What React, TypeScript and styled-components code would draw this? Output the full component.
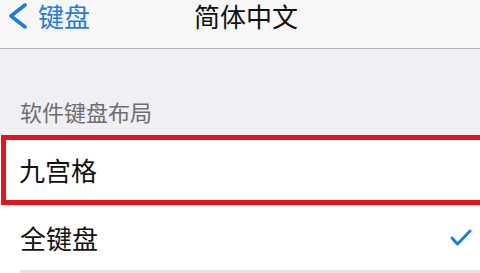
import React from 'react'
import styled, { createGlobalStyle } from 'styled-components'

const GlobalStyle = createGlobalStyle`
  html, body {
    margin: 0;
    padding: 0;
    background: #ffffff;
    overflow: hidden;
  }
  body {
    font-family: 'Noto Sans CJK SC', 'Noto Sans', sans-serif;
  }
  *, *::before, *::after {
    box-sizing: border-box;
  }
`

const Screen = styled('div')`
  width: 480px;
  height: 273px;
  overflow: hidden;
  background: #ffffff;
`

const NavBar = styled('div')`
  height: 49px;
  display: grid;
  grid-template-columns: 1fr auto 1fr;
  align-items: start;
  padding-top: 1px;
  background: #f7f7f8;
  border-bottom: 1px solid #b4b4b6;
`

const BackButton = styled('div')`
  display: flex;
  align-items: center;
  gap: 10px;
  padding-left: 8px;
  height: 29px;
  color: #1f7ddc;
  font-size: 26px;
  line-height: 29px;
`

const NavTitle = styled('div')`
  height: 29px;
  padding-left: 12px;
  color: #111111;
  font-size: 26px;
  line-height: 29px;
`

const GroupBackground = styled('div')`
  background: #efeff4;
  padding: 48px 0 10px 20px;
`

const SectionHeader = styled('div')`
  color: #6d6d72;
  font-size: 22px;
  line-height: 28px;
`

const Row = styled('div')<{ $highlighted?: boolean; $height: number }>`
  display: flex;
  align-items: center;
  justify-content: space-between;
  height: ${(p) => p.$height}px;
  padding: 0 8px 0 ${(p) => (p.$highlighted ? 13 : 20)}px;
  background: #ffffff;
  color: #111111;
  font-size: 26px;
  line-height: 30px;
  border: ${(p) => (p.$highlighted ? '5px solid #e2151c' : 'none')};
  margin: ${(p) => (p.$highlighted ? '0 -20px 0 1px' : '0')};
`

const Separator = styled('div')`
  height: 3px;
  margin-left: 20px;
  background: #e3e3e6;
`

const Chevron = () => (
  <svg width="20" height="26" viewBox="0 0 20 26">
    <polyline points="17,2 3,13 17,24" fill="none" stroke="#1f7ddc" strokeWidth="3.6" strokeLinecap="round" strokeLinejoin="round" />
  </svg>
)

const Check = () => (
  <svg width="22" height="18" viewBox="0 0 22 18">
    <polyline points="2,9 7.5,15 20,2" fill="none" stroke="#1f7ddc" strokeWidth="3" strokeLinecap="round" strokeLinejoin="round" />
  </svg>
)

export default function App() {
  return (
    <Screen>
      <GlobalStyle />
      <NavBar>
        <BackButton>
          <Chevron />
          <span>键盘</span>
        </BackButton>
        <NavTitle>简体中文</NavTitle>
        <div />
      </NavBar>
      <GroupBackground>
        <SectionHeader>软件键盘布局</SectionHeader>
      </GroupBackground>
      <Row $highlighted $height={70}>
        <span>九宫格</span>
      </Row>
      <Row $height={65}>
        <span>全键盘</span>
        <Check />
      </Row>
      <Separator />
    </Screen>
  )
}
